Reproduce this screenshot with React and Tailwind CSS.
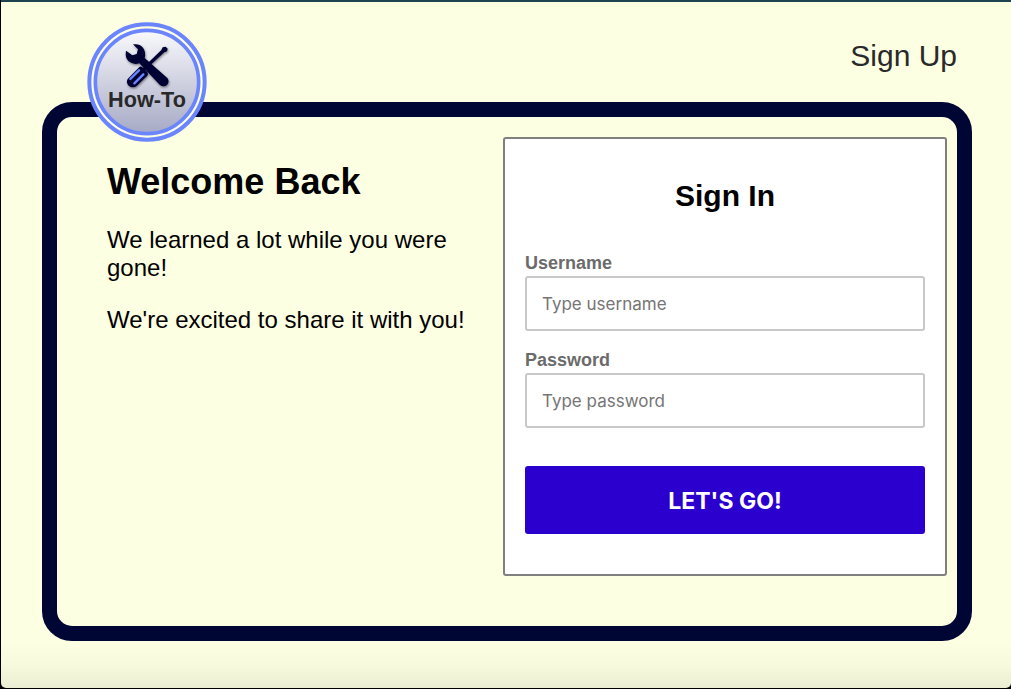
function Logo() {
  return (
    <svg viewBox="21 21 360 360" className="size-full" role="img" aria-label="How-To">
      <defs>
        <linearGradient id="disc" x1="0" y1="0" x2="0" y2="1">
          <stop offset="0" stopColor="#fafafc" />
          <stop offset="1" stopColor="#a5a9c4" />
        </linearGradient>
        <filter id="shade" x="-20%" y="-20%" width="140%" height="140%">
          <feDropShadow dx="2" dy="4" stdDeviation="3" floodColor="#000" floodOpacity="0.45" />
        </filter>
      </defs>
      <circle cx="201" cy="201" r="176" fill="#fdffe2" />
      <circle cx="201" cy="201" r="157" fill="url(#disc)" />
      <circle cx="201" cy="201" r="173" fill="none" stroke="#6b85ff" strokeWidth="12" />
      <circle cx="201" cy="201" r="155" fill="none" stroke="#6b85ff" strokeWidth="11" />
      <g filter="url(#shade)">
        <path d="M186 161 L244 105 L248 97 L257 95 L263 101 L261 109 L253 112 L192 168 Z" fill="#000633" />
        <path d="M176 158 Q181 152 187 157 L202 171 Q206 177 202 182 L170 213 Q158 221 146 212 Q137 202 143 192 Z" fill="#000633" />
        <path d="M151 192 L177 166 M163 205 L190 178" stroke="#6b85ff" strokeWidth="7" strokeLinecap="round" />
        <path d="M159 88 Q181 85 191 101 Q198 114 194 129 L262 189 Q270 200 261 210 Q250 218 239 209 L178 145 Q160 151 146 139 Q134 127 138 107 L157 121 L170 117 L174 103 Z" fill="#000633" />
      </g>
      <text x="201" y="275" textAnchor="middle" fontFamily="Liberation Sans, Arial, sans-serif" fontWeight="700" fontSize="65" fill="#292929">
        How-To
      </text>
    </svg>
  );
}

function Field({ id, label, type, placeholder }) {
  return (
    <div className="flex flex-col gap-[2px]">
      <label htmlFor={id} className="text-[18px] leading-[21px] font-bold text-[#6b6b6b]">
        {label}
      </label>
      <input
        id={id}
        type={type}
        placeholder={placeholder}
        className="h-[55px] w-full rounded-[3px] border-2 border-[#c8c8c8] bg-white px-[15px] font-[Inter,sans-serif] text-[17px] text-black placeholder:text-[#757575]"
      />
    </div>
  );
}

export default function App() {
  return (
    <div className="min-h-screen bg-black font-['Liberation_Sans',Arial,sans-serif]">
      <div className="flex min-h-screen flex-col border-b border-l border-black">
        <div className="h-[2px] bg-[#1c4450]" />
        <div className="flex-1 rounded-b-[5px] bg-[#fdffe2] bg-[linear-gradient(to_top,rgba(0,0,0,0.07),rgba(0,0,0,0.02)_24px,transparent_48px)] pb-[47px]">
          <header className="flex h-[100px] items-start justify-between pr-[54px] pl-[86px]">
            <a href="#home" className="relative z-10 mt-5 block size-[120px]">
              <Logo />
            </a>
            <a href="#signup" className="mt-9 text-[30px] leading-9 text-[#292929]">
              Sign Up
            </a>
          </header>
          <main className="mr-[39px] ml-[41px] flex flex-col rounded-[30px] border-[15px] border-[#000633] pt-5 pr-[10px] pb-[50px] pl-[50px] md:flex-row">
            <section className="flex flex-1 flex-col gap-6 pt-6 pr-5 text-black">
              <h1 className="text-[36px] leading-[41px] font-bold">Welcome Back</h1>
              <p className="text-[24px] leading-[28px]">We learned a lot while you were gone!</p>
              <p className="text-[24px] leading-[28px]">We&apos;re excited to share it with you!</p>
            </section>
            <form className="w-full rounded-[3px] border-2 border-[#808080] bg-white px-5 py-10 md:w-[444px]" onSubmit={(e) => e.preventDefault()}>
              <h2 className="text-center text-[30px] leading-[34px] font-bold text-black">Sign In</h2>
              <div className="mt-10 flex flex-col gap-[19px]">
                <Field id="username" label="Username" type="text" placeholder="Type username" />
                <Field id="password" label="Password" type="password" placeholder="Type password" />
              </div>
              <button type="submit" className="mt-[38px] h-[68px] w-full rounded-[3px] bg-[#2b00cf] pt-[2px] font-[Inter,sans-serif] text-[23px] font-bold text-white">
                LET&apos;S GO!
              </button>
            </form>
          </main>
        </div>
      </div>
    </div>
  );
}
